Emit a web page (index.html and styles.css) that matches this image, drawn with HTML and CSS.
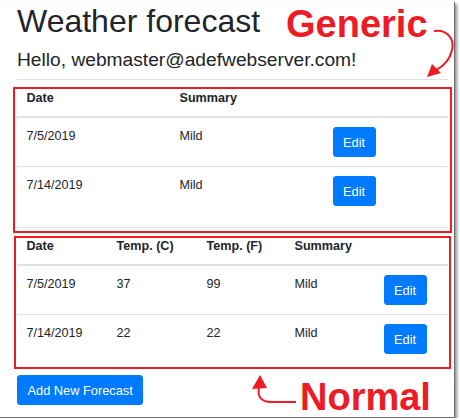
FILE: index.html
```html
<!DOCTYPE html>
<html lang="en">
<head>
  <meta charset="UTF-8">
  <meta name="viewport" content="width=device-width, initial-scale=1.0">
  <title>Weather forecast</title>
  <link rel="stylesheet" href="styles.css">
</head>
<body>
  <div class="frame">
    <main class="content">
      <h1>Weather forecast</h1>
      <h4 class="greeting">Hello, webmaster@adefwebserver.com!</h4>

      <!-- generic table -->
      <table class="table">
        <colgroup>
          <col style="width: 153px">
          <col style="width: 153px">
          <col style="width: 125px">
        </colgroup>
        <thead>
          <tr>
            <th>Date</th>
            <th>Summary</th>
            <th></th>
          </tr>
        </thead>
        <tbody>
          <tr>
            <td>7/5/2019</td>
            <td>Mild</td>
            <td><button class="btn">Edit</button></td>
          </tr>
          <tr>
            <td>7/14/2019</td>
            <td>Mild</td>
            <td><button class="btn">Edit</button></td>
          </tr>
        </tbody>
      </table>

      <!-- normal table -->
      <table class="table">
        <colgroup>
          <col style="width: 90px">
          <col style="width: 90px">
          <col style="width: 88px">
          <col style="width: 89px">
          <col style="width: 74px">
        </colgroup>
        <thead>
          <tr>
            <th>Date</th>
            <th>Temp. (C)</th>
            <th>Temp. (F)</th>
            <th>Summary</th>
            <th></th>
          </tr>
        </thead>
        <tbody>
          <tr>
            <td>7/5/2019</td>
            <td>37</td>
            <td>99</td>
            <td>Mild</td>
            <td><button class="btn">Edit</button></td>
          </tr>
          <tr>
            <td>7/14/2019</td>
            <td>22</td>
            <td>22</td>
            <td>Mild</td>
            <td><button class="btn">Edit</button></td>
          </tr>
        </tbody>
      </table>

      <button class="btn">Add New Forecast</button>
    </main>

    <!-- annotations drawn over the screenshot -->
    <svg class="marks" width="460" height="420" viewBox="0 0 460 420">
      <rect x="14" y="86" width="437" height="144" />
      <rect x="15" y="235" width="435" height="131" />
      <path d="M434 29 C446 27 455 36 452 48 C450 57 444 64 436 68" />
      <polygon points="427,75 432,62 441,71" />
      <path d="M296 400 L271 400 C262 400 257 395 259 386" />
      <polygon points="260,373 252,387 267,386" />
    </svg>
    <span class="note note-generic">Generic</span>
    <span class="note note-normal">Normal</span>
  </div>
</body>
</html>
```

FILE: styles.css
```css
* {
  box-sizing: border-box;
}

body {
  margin: 0;
  background: #ffffff;
  font-family: "Liberation Sans", Arial, sans-serif;
  color: #212529;
}

.frame {
  position: relative;
  width: 455px;
  height: 416px;
  background: #ffffff;
  border-right: 1px solid #6e6e6e;
  border-bottom: 1px solid #6e6e6e;
  box-shadow: 2px 2px 3px rgba(0, 0, 0, 0.45);
}

.content {
  width: 448px;
  padding-left: 17px;
}

h1 {
  margin: 2px 0 8px;
  font-size: 32px;
  font-weight: normal;
  line-height: 38px;
}

.greeting {
  margin: 0 0 8px;
  font-size: 19.2px;
  font-weight: normal;
  line-height: 23px;
}

.table {
  width: 431px;
  table-layout: fixed;
  border-collapse: separate;
  border-spacing: 0;
  margin-bottom: 12px;
  font-size: 12.6px;
  line-height: 19px;
  text-align: left;
}

.table th,
.table td {
  padding: 9px 9.5px;
  vertical-align: top;
}

.table th {
  padding-bottom: 8px;
  border-top: 1px solid #dee2e6;
  border-bottom: 2px solid #dee2e6;
  font-weight: bold;
}

.table tbody tr + tr td {
  border-top: 1px solid #dee2e6;
}

.btn {
  display: inline-block;
  padding: 4.5px 9.5px;
  border: 1px solid #007bff;
  border-radius: 3px;
  background-color: #007bff;
  color: #ffffff;
  font-family: inherit;
  font-size: 12.8px;
  line-height: 19px;
  cursor: pointer;
}

/* annotations */
.marks {
  position: absolute;
  left: 0;
  top: 0;
  pointer-events: none;
}

.marks rect,
.marks path {
  fill: none;
  stroke: #ed1c24;
  stroke-width: 2;
}

.marks polygon {
  fill: #ed1c24;
}

.note {
  position: absolute;
  color: #ed1c24;
  font-size: 38px;
  font-weight: bold;
  line-height: 38px;
}

.note-generic {
  left: 286px;
  top: 3px;
}

.note-normal {
  left: 300px;
  top: 376px;
}
```
